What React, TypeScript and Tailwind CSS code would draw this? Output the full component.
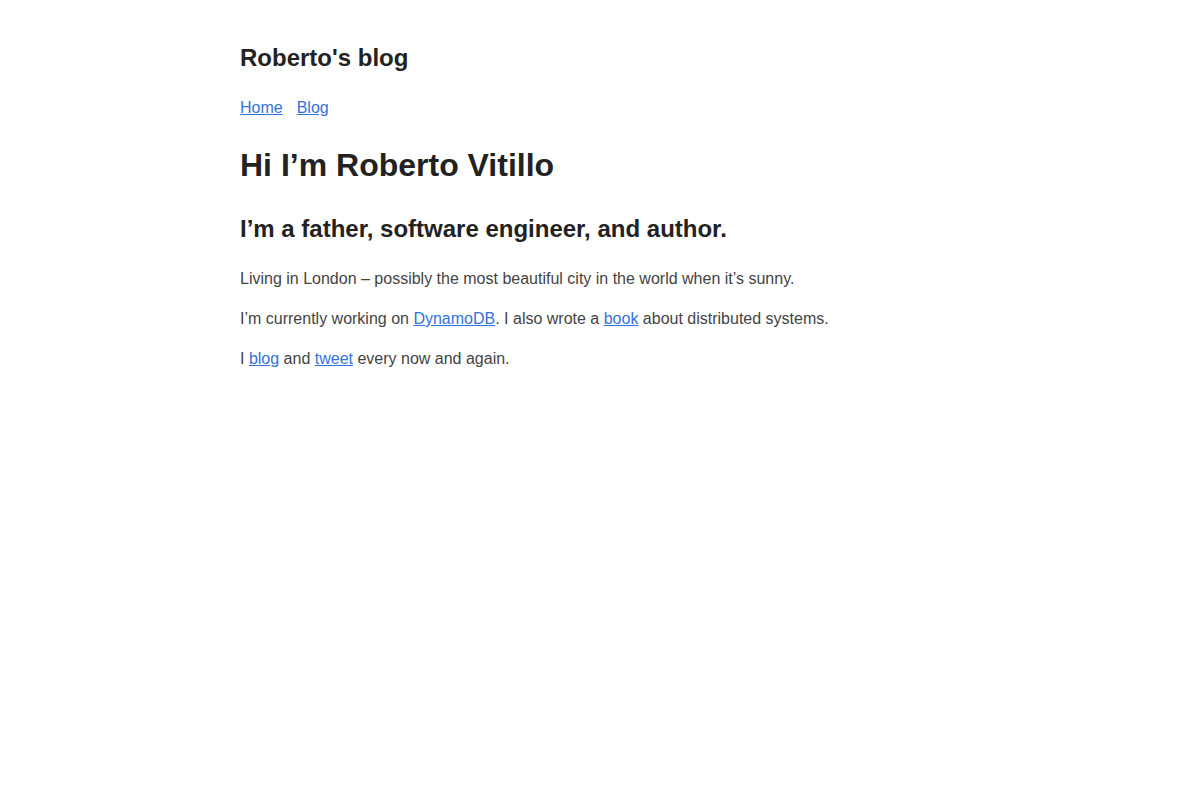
export default function App() {
  const link = "text-[#3273dc] underline";
  return (
    <div className="min-h-screen bg-white" style={{ fontFamily: '"Liberation Sans", Arial, sans-serif' }}>
      <div className="mx-auto w-[720px] pt-[40px]">
        <header>
          <div className="text-[24px] leading-[36px] font-bold text-[#222]">Roberto's blog</div>
          <nav className="mt-[20px] flex gap-[14px] text-[16px] leading-[24px]">
            <a href="#" className={link}>Home</a>
            <a href="#" className={link}>Blog</a>
          </nav>
        </header>
        <main>
          <h1 className="mt-[25px] text-[32px] leading-[40px] font-bold text-[#222]">Hi I’m Roberto Vitillo</h1>
          <h2 className="mt-[28px] text-[24px] leading-[32px] font-bold text-[#222]">I’m a father, software engineer, and author.</h2>
          <div className="mt-[22px] flex flex-col gap-[16px] text-[16px] leading-[24px] text-[#444]">
            <p>Living in London – possibly the most beautiful city in the world when it’s sunny.</p>
            <p>
              I’m currently working on <a href="#" className={link}>DynamoDB</a>. I also wrote a{" "}
              <a href="#" className={link}>book</a> about distributed systems.
            </p>
            <p>
              I <a href="#" className={link}>blog</a> and <a href="#" className={link}>tweet</a> every now and again.
            </p>
          </div>
        </main>
      </div>
    </div>
  );
}
